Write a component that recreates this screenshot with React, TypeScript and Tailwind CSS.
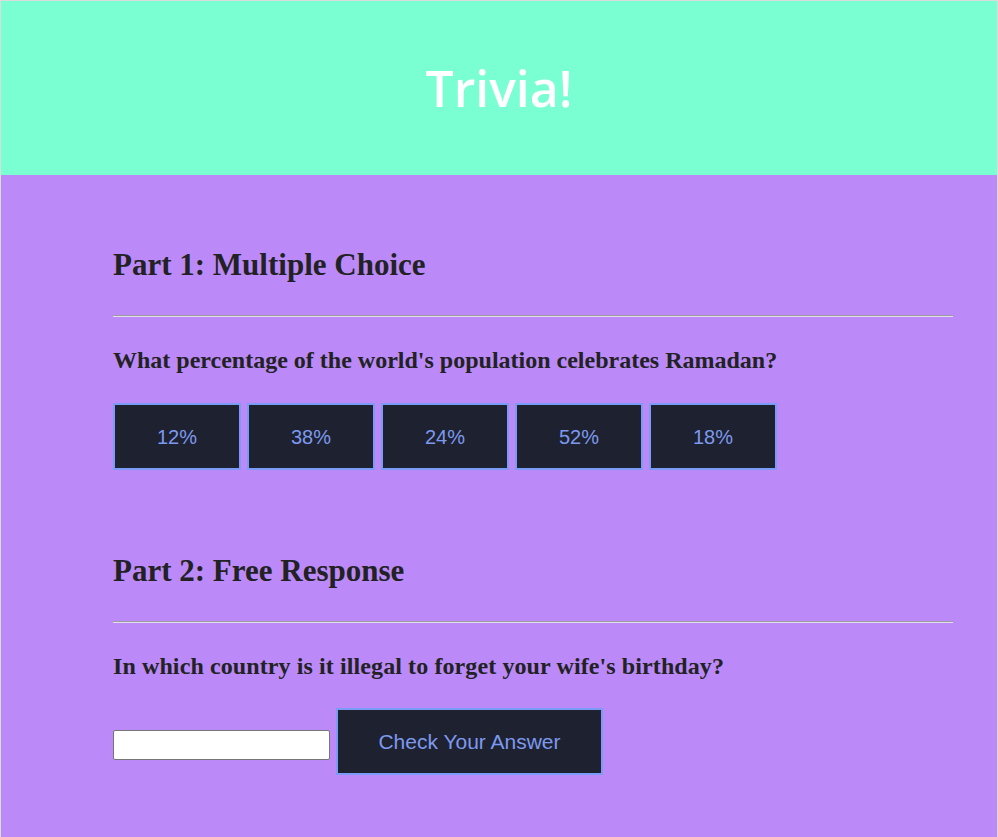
import React from "react";

const serif = { fontFamily: '"Liberation Serif", "Times New Roman", serif' } as const;
const sans = { fontFamily: '"Liberation Sans", Arial, sans-serif' } as const;

const CHOICES = ["12%", "38%", "24%", "52%", "18%"];

function Rule() {
  return <div className="h-[2px] border-t border-t-[#9c9c9c] border-b border-b-[#e4dcef]" />;
}

function Answer({ label, wide }: { label: string; wide?: boolean }) {
  return (
    <button
      className={`h-[67px] bg-[#1e2130] border-2 border-[#7b9cf6] text-[#7d99ee] ${wide ? "w-[267px] text-[21px]" : "w-[128px] text-[20px]"}`}
      style={sans}
    >
      {label}
    </button>
  );
}

export default function App() {
  return (
    <div className="min-h-[837px] border-t border-x border-[#dcdcdc] bg-[#bb8af8] text-[#222224]">
      <header className="h-[174px] bg-[#79ffd2] flex items-center justify-center">
        <h1 className="text-white text-[50px] font-semibold" style={{ fontFamily: '"Open Sans", sans-serif' }}>
          Trivia!
        </h1>
      </header>

      <main className="pl-[112px] pr-[44px] pt-[71px] pb-[40px]" style={serif}>
        <section>
          <h2 className="text-[31px] font-bold leading-[37px]">Part 1: Multiple Choice</h2>
          <div className="mt-[32px]">
            <Rule />
          </div>
          <h3 className="mt-[29px] text-[24px] font-bold leading-[28px]">
            What percentage of the world's population celebrates Ramadan?
          </h3>
          <div className="mt-[29px] flex gap-[6px]">
            {CHOICES.map((c) => (
              <Answer key={c} label={c} />
            ))}
          </div>
        </section>

        <section className="mt-[82px]">
          <h2 className="text-[31px] font-bold leading-[37px]">Part 2: Free Response</h2>
          <div className="mt-[32px]">
            <Rule />
          </div>
          <h3 className="mt-[29px] text-[24px] font-bold leading-[28px] tracking-[0.1px]">
            In which country is it illegal to forget your wife's birthday?
          </h3>
          <div className="mt-[28px] flex items-center gap-[6px]">
            <input
              type="text"
              className="mt-[6px] w-[217px] h-[30px] bg-white border border-[#767676] rounded-[2px] px-1 text-[14px]"
              style={sans}
            />
            <Answer label="Check Your Answer" wide />
          </div>
        </section>
      </main>
    </div>
  );
}
